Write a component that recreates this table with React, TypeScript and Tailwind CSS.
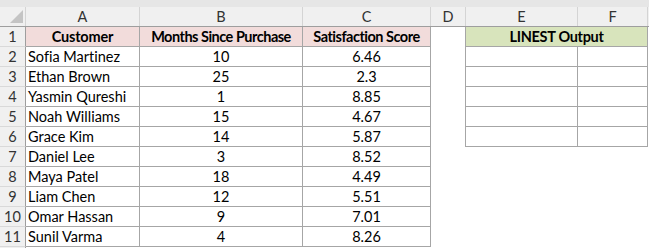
const rows: [string, number, number][] = [
  ["Sofia Martinez", 10, 6.46],
  ["Ethan Brown", 25, 2.3],
  ["Yasmin Qureshi", 1, 8.85],
  ["Noah Williams", 15, 4.67],
  ["Grace Kim", 14, 5.87],
  ["Daniel Lee", 3, 8.52],
  ["Maya Patel", 18, 4.49],
  ["Liam Chen", 12, 5.51],
  ["Omar Hassan", 9, 7.01],
  ["Sunil Varma", 4, 8.26],
];

const font = { fontFamily: "Lato, 'Liberation Sans', sans-serif" };

function RowHead({ n }: { n: number }) {
  return (
    <div className="flex h-[20px] w-[26px] shrink-0 items-center justify-center border-r border-b border-r-[#9e9e9e] border-b-[#d9d9d9] bg-[#f0f0f0] pt-px text-[#333]">
      {n}
    </div>
  );
}

export default function App() {
  return (
    <div
      className="h-[248px] w-[649px] overflow-hidden bg-white text-[14.5px] leading-none text-black [font-variant-ligatures:none]"
      style={font}
    >
      <div className="h-[7px] bg-[#e6e6e6]" />
      <div className="flex h-[20px] border-b border-[#9e9e9e] bg-[#f0f0f0] text-[#333]">
        <div className="relative w-[26px] shrink-0 border-r border-[#d4d4d4]">
          <svg width="13" height="13" viewBox="0 0 13 13" className="absolute left-[10px] top-[3px]">
            <polygon points="13,0 13,13 0,13" fill="#c4c4c4" />
          </svg>
        </div>
        <div className="flex w-[114px] items-center justify-center border-r border-[#d4d4d4] pt-px">A</div>
        <div className="flex w-[163px] items-center justify-center border-r border-[#d4d4d4] pt-px">B</div>
        <div className="flex w-[128px] items-center justify-center border-r border-[#d4d4d4] pt-px">C</div>
        <div className="flex w-[35px] items-center justify-center border-r border-[#d4d4d4] pt-px">D</div>
        <div className="flex w-[112px] items-center justify-center border-r border-[#d4d4d4] pt-px">E</div>
        <div className="flex w-[70px] items-center justify-center border-r border-[#d4d4d4] pt-px">F</div>
      </div>

      <div className="flex">
        <RowHead n={1} />
        <div className="flex h-[20px] w-[114px] items-center justify-center border-r border-b border-[#a6a6a6] bg-[#f2dcdb] pt-px text-[14.5px] font-bold tracking-[-0.2px]">
          Customer
        </div>
        <div className="flex h-[20px] w-[163px] items-center justify-center border-r border-b border-[#a6a6a6] bg-[#f2dcdb] pt-px text-[14.5px] font-bold tracking-[-0.5px]">
          Months Since Purchase
        </div>
        <div className="flex h-[20px] w-[128px] items-center justify-center border-r border-b border-[#a6a6a6] bg-[#f2dcdb] pt-px text-[14.5px] font-bold tracking-[-0.5px]">
          Satisfaction Score
        </div>
        <div className="h-[20px] w-[35px] border-r border-[#a6a6a6]" />
        <div className="flex h-[20px] w-[182px] items-center justify-center border-r border-b border-[#a6a6a6] bg-[#d8e4bc] pt-px text-[14.5px] font-bold tracking-[-0.3px]">
          LINEST Output
        </div>
      </div>

      {rows.map(([name, months, score], i) => {
        const n = i + 2;
        const boxed = n <= 6;
        return (
          <div key={n} className="flex">
            <RowHead n={n} />
            <div className="flex h-[20px] w-[114px] items-center border-r border-b border-[#a6a6a6] pl-[2px] pt-px">
              {name}
            </div>
            <div className="flex h-[20px] w-[163px] items-center justify-center border-r border-b border-[#a6a6a6] pt-px">
              {months}
            </div>
            <div className="flex h-[20px] w-[128px] items-center justify-center border-r border-b border-[#a6a6a6] pt-px">
              {score}
            </div>
            {boxed ? (
              <>
                <div className="h-[20px] w-[35px] border-r border-[#a6a6a6]" />
                <div className="h-[20px] w-[112px] border-r border-b border-[#a6a6a6]" />
                <div className="h-[20px] w-[70px] border-r border-b border-[#a6a6a6]" />
              </>
            ) : null}
          </div>
        );
      })}
      <div className="h-px w-[26px] border-r border-[#9e9e9e] bg-[#f0f0f0]" />
    </div>
  );
}
